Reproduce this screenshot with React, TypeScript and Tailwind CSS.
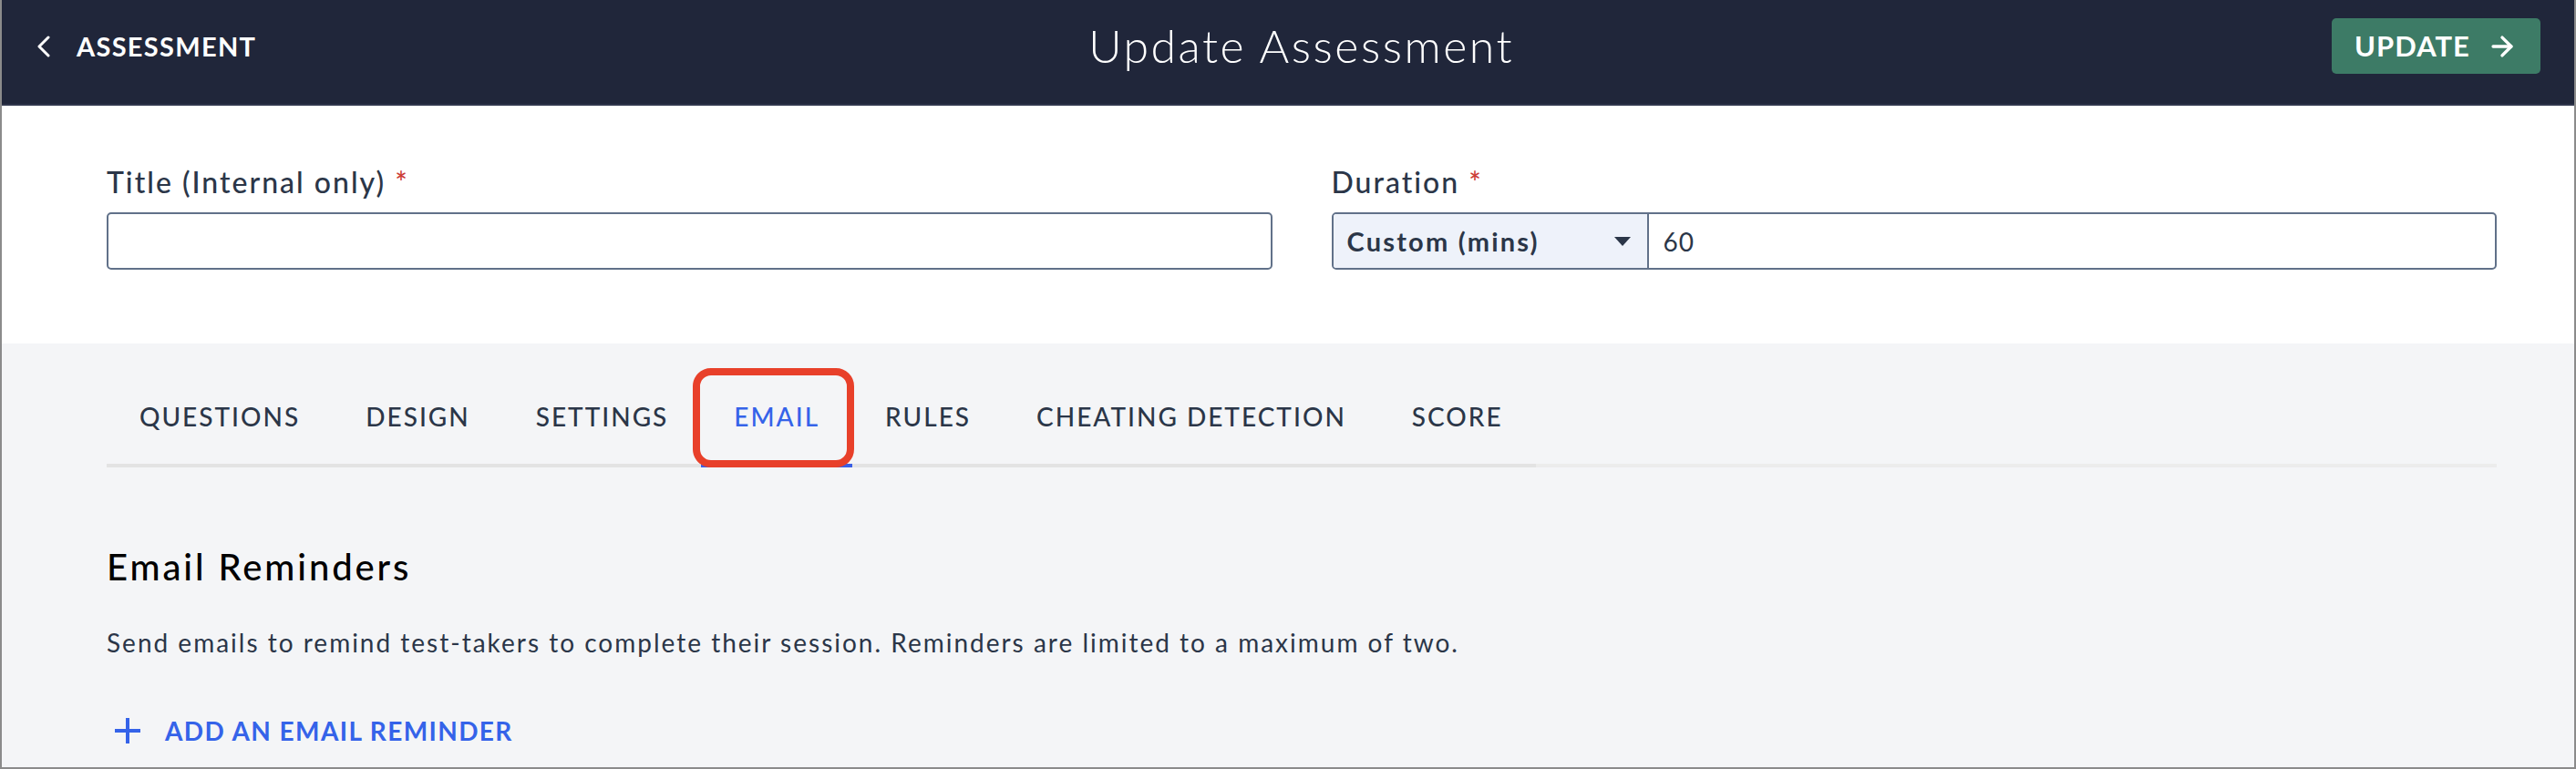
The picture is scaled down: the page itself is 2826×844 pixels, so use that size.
import { ArrowRight } from "lucide-react";

const tabs = ["QUESTIONS", "DESIGN", "SETTINGS", "EMAIL", "RULES", "CHEATING DETECTION", "SCORE"];

function Chevron() {
  return (
    <svg width="16" height="24" viewBox="0 0 16 24" fill="none">
      <polyline points="13,2 3,12 13,22" stroke="white" strokeWidth="3" strokeLinecap="round" strokeLinejoin="round" />
    </svg>
  );
}

function Plus() {
  return (
    <svg width="28" height="28" viewBox="0 0 28 28">
      <rect x="12" y="0" width="4" height="28" fill="#3563e9" />
      <rect x="0" y="12" width="28" height="4" fill="#3563e9" />
    </svg>
  );
}

export default function App() {
  return (
    <div className="h-[844px] w-full overflow-hidden border-x-2 border-b-2 border-[#8b8b8b] bg-[#f4f5f7] font-['Lato',sans-serif]">
      {/* top bar */}
      <header className="h-[116px] pb-[13px] bg-[#20263a] border-b-2 border-[#30364c] flex items-center justify-between pl-[38px] pr-[37px]">
        <div className="flex items-center gap-[28px] text-white">
          <Chevron />
          <span className="text-[29px] font-bold tracking-[1.3px]">ASSESSMENT</span>
        </div>
        <h1 className="ml-4 text-[50px] font-light text-white tracking-[2.5px]">Update Assessment</h1>
        <button className="h-[61px] w-[229px] rounded-[5px] bg-[#3d7b66] text-white flex items-center justify-center gap-[18px]">
          <span className="text-[31px] font-bold tracking-[1px]">UPDATE</span>
          <ArrowRight size={34} strokeWidth={2.4} />
        </button>
      </header>

      {/* title + duration */}
      <section className="bg-white pl-[115px] pr-[85px] pt-[64px] pb-[81px] grid grid-cols-2 gap-x-[65px] text-[#2b3648]">
        <div>
          <label className="block text-[32px] leading-[40px] font-medium mb-[13px] tracking-[2px]">
            Title (Internal only) <span className="text-[#cc3b35]">*</span>
          </label>
          <div className="h-[63px] border-2 border-[#617189] rounded-[5px] bg-white" />
        </div>
        <div>
          <label className="block text-[32px] leading-[40px] font-medium mb-[13px] tracking-[2px]">
            Duration <span className="text-[#cc3b35]">*</span>
          </label>
          <div className="h-[63px] border-2 border-[#617189] rounded-[5px] bg-white flex overflow-hidden">
            <div className="w-[346px] bg-[#eef2fa] border-r-2 border-[#617189] flex items-center justify-between pl-[15px] pr-[18px]">
              <span className="text-[29px] font-bold tracking-[2.2px]">Custom (mins)</span>
              <svg width="18" height="10" viewBox="0 0 18 10">
                <polygon points="0,0 18,0 9,10" fill="#2b3648" />
              </svg>
            </div>
            <div className="flex-1 flex items-center pl-[16px] text-[28px] tracking-[1px]">60</div>
          </div>
        </div>
      </section>

      {/* tabs + content */}
      <section className="pl-[115px] pr-[85px] pt-[28px]">
        <div className="flex">
          {tabs.map((t) => {
            const active = t === "EMAIL";
            return (
              <div
                key={t}
                className={
                  "relative h-[108px] px-[36px] flex items-center border-b-4 text-[28px] font-medium tracking-[2px] " +
                  (active ? "border-[#3a5fe5] text-[#3563e9]" : "border-[#e3e3e3] text-[#2b3648]")
                }
              >
                {t}
                {active && (
                  <div className="absolute -top-[1px] -left-[9px] -right-[2px] -bottom-[4px] border-[8px] border-[#e8402a] rounded-[20px]" />
                )}
              </div>
            );
          })}
          <div className="flex-1 border-b-4 border-[#ececec]" />
        </div>

        <h2 className="mt-[85px] text-[40px] leading-[48px] font-medium text-black tracking-[2.9px]">Email Reminders</h2>
        <p className="mt-[41px] text-[28px] leading-[36px] text-[#2b3648] tracking-[2px]">
          Send emails to remind test-takers to complete their session. Reminders are limited to a maximum of two.
        </p>
        <div className="mt-[61px] flex items-center gap-[27px] pl-[9px] text-[#3563e9]">
          <Plus />
          <span className="text-[28px] leading-[36px] font-bold tracking-[1.4px]">ADD AN EMAIL REMINDER</span>
        </div>
      </section>
    </div>
  );
}
